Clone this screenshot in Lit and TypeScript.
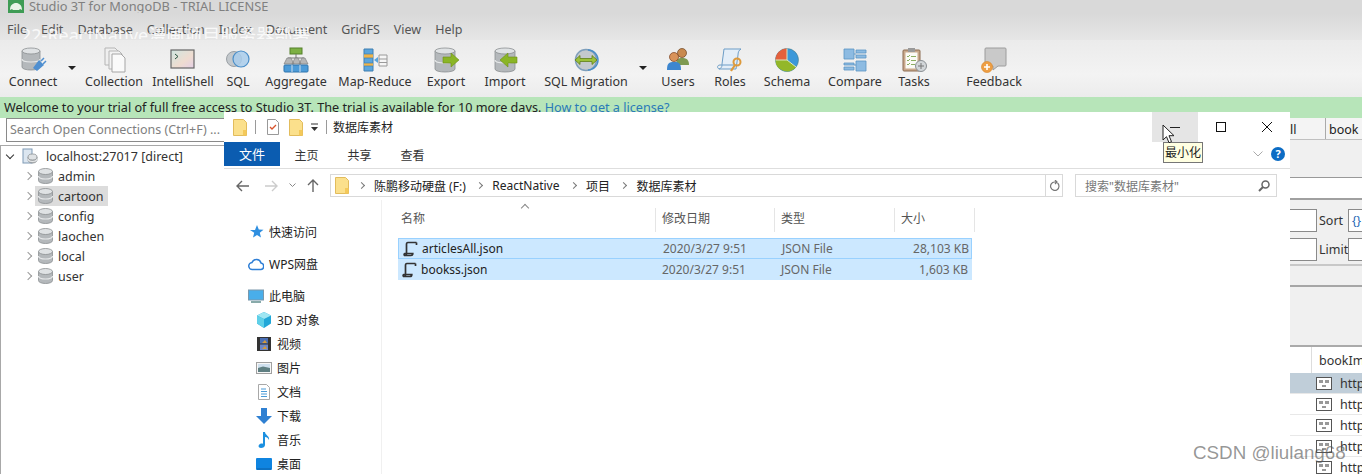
import { LitElement, html, css, svg } from 'lit';
import { customElement } from 'lit/decorators.js';

// little helpers for the repeated shapes
const cyl = (x: number, y: number, w: number, h: number) => svg`
  <path d="M${x} ${y + 3}v${h - 6}c0 4 ${w} 4 ${w} 0v-${h - 6}z" fill="#b4b8bb" stroke="#8b8f92" stroke-width=".8"/>
  <path d="M${x} ${y + h / 2}c0 4 ${w} 4 ${w} 0" fill="none" stroke="#e6e8e9" stroke-width="1.2"/>
  <ellipse cx="${x + w / 2}" cy="${y + 3}" rx="${w / 2}" ry="3" fill="#dfe2e4" stroke="#8b8f92" stroke-width=".8"/>`;

const tool = (body: unknown) => html`<svg width="28" height="26" viewBox="0 0 28 26">${body}</svg>`;
const small = (body: unknown) => html`<svg width="16" height="16" viewBox="0 0 16 16">${body}</svg>`;

const folder = html`<svg width="14" height="17" viewBox="0 0 14 17">
  <path d="M.5 .5h10l3 3v13H.5z" fill="#fbe08c" stroke="#e2bc5c"/>
  <path d="M10 11h3.5v5.5H10z" fill="#f4c95a"/>
</svg>`;

const dbSmall = html`<svg width="15" height="16" viewBox="0 0 15 16">${cyl(.5, .5, 14, 15)}</svg>`;

const jsonIcon = html`<svg width="15" height="16" viewBox="0 0 15 16">
  <path d="M5 1.500h8.500M5 1.500c-1.300 0-1.500 1-1.500 2v9.500M13.500 1.500v2.500M3.500 13c0 1.500-1 1.500-2.500 1.500h7c1.300 0 1.800-.7 1.800-2H1.500c-.5 0-.5 1-.5 2" fill="none" stroke="#333" stroke-width="1.700"/>
</svg>`;

const brokenImg = html`<svg width="16" height="13" viewBox="0 0 16 13">
  <rect x=".5" y=".5" width="15" height="12" fill="#fff" stroke="#555"/>
  <path d="M4 3v3M6 3v3M10 3v3M12 3v3M6 9h4" stroke="#333" fill="none"/>
</svg>`;

const toolIcons: Record<string, unknown> = {
  connect: tool(svg`${cyl(3, 1, 18, 22)}<path d="M14 21l6-8 5 5-7 6z" fill="#4f8fd0"/><path d="M22 14l3-3M24 17l3-3" stroke="#4f8fd0" stroke-width="1.500"/>`),
  collection: tool(svg`<path d="M5 1h10l3 3v14H5z" fill="#efefef" stroke="#b5b5b5"/><path d="M9 4h10l3 3v15H9z" fill="#f3f3f3" stroke="#b5b5b5"/><path d="M12 7h9l4 4v14H12z" fill="#fafafa" stroke="#a5a5a5"/>`),
  shell: tool(svg`<defs><linearGradient id="sh" x2="1" y2="1"><stop offset="0" stop-color="#cfe6e0"/><stop offset=".6" stop-color="#efdcd0"/><stop offset="1" stop-color="#e4cfe6"/></linearGradient></defs>
    <rect x="2" y="3" width="23" height="18" fill="url(#sh)" stroke="#666" stroke-width="1.200"/><path d="M6 7l3 2.500-3 2.500" fill="none" stroke="#27543f"/>`),
  sql: tool(svg`<circle cx="10" cy="12" r="7.500" fill="#c3c8cc" stroke="#9aa0a5"/><circle cx="17" cy="12" r="8" fill="#a9cdeb" fill-opacity=".85" stroke="#4a8ec8" stroke-width="1.200"/>`),
  aggregate: tool(svg`<rect x="8" y="1" width="12" height="6" fill="#7db044" stroke="#55802a"/><path d="M14 7v4M6 11h16" stroke="#777"/>
    <path d="M2 17l3-6h4l3 6zM10 17l3-6h3l3 6zM17 17l3-6h3l3 6z" fill="#b6b6b6" stroke="#808080" stroke-width=".7"/>
    <rect x="2" y="18" width="24" height="7" rx="1" fill="#4c9bd8" stroke="#2f75ad"/><path d="M10 18v7M18 18v7" stroke="#cde"/>`),
  mapreduce: tool(svg`<path d="M3 2h9v22H3z" fill="#5aa5dd" stroke="#3e7fb0"/><path d="M3 7h9v4H3zM3 16h9v3H3z" fill="#f0b44a"/><path d="M3 7h9M3 11h9M3 16h9M3 19h9" stroke="#3e7fb0" stroke-width=".7"/>
    <path d="M13 13l4-3v6z" fill="#5aa5dd"/><path d="M18 8h8v11h-8z" fill="#f6f6f6" stroke="#9a9a9a"/><path d="M18 12h8M18 15.500h8" stroke="#9a9a9a"/>`),
  export: tool(svg`${cyl(3, 1, 20, 24)}<path d="M11 10h8V6l8 7-8 7v-4h-8z" fill="#8ab526" stroke="#6b8f16" stroke-width=".6"/>`),
  import: tool(svg`${cyl(4, 1, 20, 24)}<path d="M26 10h-9V6l-8 7 8 7v-4h9z" fill="#8ab526" stroke="#6b8f16" stroke-width=".6"/>`),
  migration: tool(svg`<circle cx="14" cy="13" r="10.500" fill="#c4c9cd" stroke="#7f9fbb" stroke-width="1.500"/><path d="M16 3a10 10 0 0 1 0 20" fill="none" stroke="#4a8ec8" stroke-width="1.500"/>
    <path d="M3 13l5-4.500v3h12v-3l5 4.500-5 4.500v-3H8v3z" fill="#9cc13a" stroke="#5e7f17" stroke-width=".8"/>`),
  users: tool(svg`<circle cx="18" cy="6" r="4.500" fill="#c98a4f" stroke="#6c421f" stroke-width=".7"/><path d="M12 18c0-6 2-7 6-7s7 1 7 7z" fill="#7e9a52"/>
    <circle cx="10" cy="10" r="4.500" fill="#d9935a" stroke="#7a3d1c" stroke-width=".7"/><path d="M3 23c0-7 2-8 7-8s7 1 7 8z" fill="#3d86cf"/>`),
  roles: tool(svg`<path d="M8 2h17c-2 1-3 3-3 6l-2 14H3c3-1 3-3 3-5z" fill="#e4eef8" stroke="#6c9dc7"/><path d="M3 22c-2-1-2-4 1-4h14" fill="none" stroke="#6c9dc7"/>
    <circle cx="21" cy="15" r="3.500" fill="none" stroke="#dd9a3c" stroke-width="2"/><path d="M19 18l-4 6" stroke="#dd9a3c" stroke-width="2.200"/>`),
  schema: tool(svg`<circle cx="14" cy="13" r="11.500" fill="#3b98d9" stroke="#477" stroke-width=".5"/><path d="M14 13V1.500A11.500 11.500 0 0 0 2.500 13z" fill="#e4603d"/><path d="M14 13H2.500A11.500 11.500 0 0 0 23 20z" fill="#93b72a"/><path d="M14 1.500V13h-11.500M14 13l9 7" stroke="#dce6c0" fill="none"/>`),
  compare: tool(svg`<path d="M3 2h10v10H3zM15 3h10v3H15zM15 8h10v3H15z" fill="#8dbbe2" stroke="#5b94c4" stroke-width=".8"/><path d="M3 16h10v2H3zM3 20h10v3H3zM15 14h10v10H15z" fill="#8dbbe2" stroke="#5b94c4" stroke-width=".8"/><path d="M13 7h2M13 18h2" stroke="#5b94c4"/>`),
  tasks: tool(svg`<rect x="3" y="3" width="17" height="21" rx="1" fill="#c9a98c" stroke="#8b6d52"/><rect x="5.500" y="5.500" width="12" height="16" fill="#fbfbf6"/><rect x="8" y="1" width="7" height="4" fill="#9a9a9a"/>
    <path d="M7 9l1 1 2-2M7 13l1 1 2-2M7 17l1 1 2-2M11 9.500h5M11 13.500h5M11 17.500h4" stroke="#6e9a3c" fill="none" stroke-width=".8"/>
    <circle cx="21" cy="19" r="5.500" fill="#d2d6d9" stroke="#8a8f93"/><path d="M21 16v6M18 19h6" stroke="#777"/>`),
  feedback: tool(svg`<path d="M6 1h19a1 1 0 0 1 1 1v16a1 1 0 0 1-1 1h-7l-5 4v-4H6a1 1 0 0 1-1-1V2a1 1 0 0 1 1-1z" fill="#c9c9c9" stroke="#9c9c9c"/><circle cx="7" cy="20" r="5.500" fill="#ee9f45" stroke="#d98324" stroke-width=".6"/><path d="M7 17v6M4 20h6" stroke="#fff" stroke-width="1.600"/>`),
};

const toolbar = [
  { w: 58, label: 'Connect', icon: 'connect' }, { w: 20, arrow: true },
  { w: 64, label: 'Collection', icon: 'collection' }, { w: 74, label: 'IntelliShell', icon: 'shell' },
  { w: 36, label: 'SQL', icon: 'sql' }, { w: 80, label: 'Aggregate', icon: 'aggregate' },
  { w: 78, label: 'Map-Reduce', icon: 'mapreduce' }, { w: 64, label: 'Export', icon: 'export' },
  { w: 54, label: 'Import', icon: 'import' }, { w: 108, label: 'SQL Migration', icon: 'migration' },
  { w: 6, arrow: true }, { w: 64, label: 'Users', icon: 'users' }, { w: 40, label: 'Roles', icon: 'roles' },
  { w: 74, label: 'Schema', icon: 'schema' }, { w: 62, label: 'Compare', icon: 'compare' },
  { w: 56, label: 'Tasks', icon: 'tasks' }, { w: 104, label: 'Feedback', icon: 'feedback' },
];

const navIcons: Record<string, unknown> = {
  star: small(svg`<path d="M9 1l1.800 4.500 4.700.3-3.700 3 1.200 4.700L9 11l-4 2.500 1.200-4.700L2 6h5z" fill="#2f8fe0"/>`),
  cloud: small(svg`<path d="M4.500 13.500a3.500 3.500 0 0 1-.5-7 4.800 4.800 0 0 1 9 0.500 3.300 3.300 0 0 1 0 6.500z" fill="#fff" stroke="#2f7fd6" stroke-width="1.500"/>`),
  pc: small(svg`<rect x=".5" y="2" width="15" height="10" fill="#49aeea" stroke="#7a98ac"/><path d="M3 14h10" stroke="#8aa" stroke-width="2"/>`),
  cube: small(svg`<path d="M8 0l7 3.500v8L8 16l-7-4.500v-8z" fill="#22a7d8"/><path d="M8 7L1 3.500 8 0l7 3.500z" fill="#9fe6f2"/><path d="M1 3.500L8 7v9l-7-4.500z" fill="#5fd0e8"/>`),
  film: small(svg`<rect x="1" y="1" width="14" height="14" fill="#333"/><rect x="4" y="2" width="8" height="5.500" fill="#4a6fb5"/><rect x="4" y="8.500" width="8" height="5.500" fill="#6d88c8"/><path d="M6 7l3-3 2 3zM6 13l3-3 2 3z" fill="#d49a3c"/>`),
  pic: small(svg`<rect x=".5" y="2.500" width="15" height="11" fill="#f7f7f7" stroke="#a0a0a0"/><rect x="2" y="4" width="12" height="4" fill="#cfe0ee"/><path d="M2 8l5-1.500L14 8v4H2z" fill="#5f7f82"/>`),
  doc: small(svg`<path d="M2.500 .5h8l3 3v12h-11z" fill="#fff" stroke="#a8a8a8"/><path d="M5 5h5M5 7.500h6M5 10h6M5 12.500h6" stroke="#4a9bd8"/>`),
  down: small(svg`<path d="M5 0h6v8h5l-8 8-8-8h5z" fill="#2f80d2"/>`),
  music: small(svg`<path d="M7 0h2c0 3 5 4 4 8-1-2-2-3-4-3v8c0 2-2 3-4 3-3 0-3-3-1-4 1-.5 2-.5 3-.2z" fill="#1c90e0"/>`),
  desk: small(svg`<rect x="0" y="2" width="16" height="12" rx="1" fill="#0f84e0"/><path d="M1 13h14" stroke="#0a5fa6"/>`),
};

const navItems = [
  { label: '快速访问', icon: 'star', top: true, first: true },
  { label: 'WPS网盘', icon: 'cloud', top: true },
  { label: '此电脑', icon: 'pc', top: true },
  { label: '3D 对象', icon: 'cube' }, { label: '视频', icon: 'film' }, { label: '图片', icon: 'pic' },
  { label: '文档', icon: 'doc' }, { label: '下载', icon: 'down' }, { label: '音乐', icon: 'music' }, { label: '桌面', icon: 'desk' },
];

const dbs = ['admin', 'cartoon', 'config', 'laochen', 'local', 'user'];
const files = [
  { name: 'articlesAll.json', size: '28,103 KB' },
  { name: 'bookss.json', size: '1,603 KB' },
];
const crumbs = ['陈鹏移动硬盘 (F:)', 'ReactNative', '项目', '数据库素材'];

@customElement('app-root')
export class AppRoot extends LitElement {
  static styles = css`
    :host { display: block; width: 1362px; height: 474px; position: relative; overflow: hidden;
      font-family: "Noto Sans", "Noto Sans CJK SC", sans-serif; color: #222; background: #fff; }
    svg { display: block; flex: none; }

    /* Studio 3T behind */
    .app { display: flex; flex-direction: column; height: 474px; }
    .title { height: 13px; flex: none; background: #d9d9d9; display: flex; align-items: center; padding: 0 0 2px 8px; box-sizing: border-box; gap: 5px; font-size: 12.800px; color: #808080; overflow: hidden; }
    .logo { flex: none; margin-bottom: -2px; }
    .menu { height: 27px; flex: none; background: linear-gradient(#d9d9d9, #e6e6e6); display: flex; gap: 14px; align-items: center; padding: 5px 0 0 7px; box-sizing: border-box; font-size: 12.500px; color: #555; }
    .tools { height: 57px; flex: none; background: linear-gradient(#ebebeb, #f3f3f3 60%, #ececec); display: flex; padding-left: 4px; font-size: 12.500px; }
    .tool { display: flex; flex-direction: column; align-items: center; flex: none; padding-top: 7px; white-space: nowrap; }
    .tool span { line-height: 18px; color: #333; }
    .drop { display: flex; justify-content: center; flex: none; padding-top: 26px; }
    .arrow { width: 0; height: 0; flex: none; border: 4px solid transparent; border-top: 4px solid #222; border-bottom: 0; }
    .banner { height: 21px; flex: none; background: #b7e5b9; font-size: 12.650px; line-height: 21px; padding-left: 4px; white-space: nowrap; color: #222; }
    .banner a { color: #2a7ab8; }
    .body { flex: 1; display: flex; justify-content: space-between; min-height: 0; background: #fff; }
    .left { width: 224px; }
    .search { margin-left: 6px; height: 24px; box-sizing: border-box; border: 1px solid #8a8a8a; border-right: 0; font-size: 12.500px; color: #808080; line-height: 22px; padding-left: 3px; white-space: nowrap; }
    .tree { margin-top: 3px; border-top: 1px solid #a8a8a8; border-left: 1px solid #a8a8a8; height: 330px; font-size: 12.500px; color: #333; }
    .root { display: flex; align-items: center; height: 20px; padding-left: 6px; }
    .chev { width: 5px; height: 5px; border-right: 1.500px solid #333; border-bottom: 1.500px solid #333; transform: rotate(45deg); margin: 0 9px 3px 0; flex: none; }
    .root svg { margin-right: 8px; }
    .db { display: flex; align-items: center; height: 20px; padding-left: 24px; }
    .closed { width: 5px; height: 5px; border-right: 1.500px solid #999; border-top: 1.500px solid #999; transform: rotate(45deg); margin-right: 4px; flex: none; }
    .pick { display: flex; align-items: center; gap: 5px; height: 20px; padding: 0 4px 0 3px; }
    .pick.on { background: #dcdcdc; }

    .right { width: 72px; display: flex; flex-direction: column; font-size: 12.500px; background: #f0f0f0; }
    .tabs { height: 22px; flex: none; display: flex; border-bottom: 1px solid #c0c0c0; box-sizing: border-box; background: #f4f4f4; }
    .tabs div { line-height: 24px; white-space: nowrap; overflow: hidden; }
    .tabs .a { width: 35px; flex: none; text-indent: -8px; border-right: 1px solid #aaa; }
    .tabs .b { flex: 1; padding-left: 3px; }
    .gap1 { height: 38px; flex: none; border-bottom: 1px solid #999; box-sizing: border-box; }
    .whitebar { height: 22px; flex: none; background: #fff; border-bottom: 2px solid #a0a0a0; box-sizing: border-box; }
    .form { height: 66px; flex: none; border-bottom: 2px solid #c8c8c8; box-sizing: border-box; padding-top: 9px; display: flex; flex-direction: column; gap: 6px; }
    .fr { display: flex; align-items: center; height: 23px; }
    .box { background: #fff; border: 1px solid #8a8a8a; border-left: 0; height: 23px; box-sizing: border-box; flex: none; }
    .fr .box:first-child { width: 27px; }
    .fr span { width: 31px; flex: none; padding-left: 2px; box-sizing: border-box; color: #333; }
    .fr .box:last-child { flex: 1; border-left: 1px solid #8a8a8a; border-right: 0; font-size: 12px; color: #2467b5; padding-left: 3px; line-height: 21px; }
    .gap2 { height: 21px; flex: none; border-bottom: 2px solid #a6a6a6; box-sizing: border-box; }
    .gap3 { height: 60px; flex: none; border-bottom: 2px solid #aaa; box-sizing: border-box; }
    .grid { flex: 1; background: #fff; min-height: 0; overflow: hidden; }
    .grhead { height: 26px; box-sizing: border-box; line-height: 28px; margin-left: 21px; padding-left: 7px; border-left: 1px solid #ddd; color: #333; white-space: nowrap; }
    .row { height: 21px; display: flex; align-items: center; gap: 8px; padding-left: 26px; border-bottom: 1px solid #e8e8e8; box-sizing: border-box; overflow: hidden; color: #333; }
    .row.on { background: #c0ced9; }

    /* Explorer is a window on the desktop */
    .win { position: absolute; left: 224px; top: 112px; width: 1066px; height: 362px; background: #fff; display: flex; flex-direction: column; overflow: hidden; font-size: 12px; color: #333; }
    .wt { height: 30px; flex: none; display: flex; align-items: center; padding-left: 9px; }
    .sep { width: 1px; height: 14px; background: #9a9a9a; flex: none; }
    .wname { margin-left: 6px; color: #222; }
    .ctl { margin-left: auto; display: flex; height: 30px; }
    .ctl div { width: 46px; display: flex; align-items: center; justify-content: center; flex: none; }
    .ctl .hov { background: #e5e5e5; }
    .rib { height: 27px; flex: none; display: flex; align-items: stretch; border-bottom: 1px solid #dedede; box-sizing: border-box; }
    .rib .file { width: 56px; height: 24px; background: #0b5cb0; color: #fff; text-align: center; line-height: 24px; font-size: 13px; flex: none; }
    .rib .t { width: 53px; text-align: center; line-height: 28px; flex: none; }
    .rib .end { margin-left: auto; display: flex; align-items: center; gap: 8px; padding: 0 5px 3px 0; }
    .help { width: 14px; height: 14px; border-radius: 50%; background: #0c6cc4; color: #fff; font-weight: 700; font-size: 11px; line-height: 14px; text-align: center; }
    .addr { height: 31px; flex: none; display: flex; align-items: center; padding-top: 2px; box-sizing: border-box; }
    .nav { display: flex; align-items: center; width: 106px; flex: none; padding-left: 12px; box-sizing: border-box; }
    .abox { width: 716px; height: 23px; flex: none; border: 1px solid #d9d9d9; box-sizing: border-box; display: flex; align-items: center; padding-left: 4px; }
    .abox .sp { width: 4px; height: 1px; flex: none; }
    .gt { width: 4px; height: 4px; border-right: 1px solid #777; border-top: 1px solid #777; transform: rotate(45deg); margin: 0 10px 0 6px; flex: none; }
    .crumb { margin-right: 5.500px; color: #222; }
    .ref { width: 17px; height: 23px; flex: none; border: 1px solid #d9d9d9; border-left: 0; box-sizing: border-box; display: flex; align-items: center; justify-content: center; margin-right: 12px; }
    .sbox { width: 202px; height: 23px; flex: none; border: 1px solid #d9d9d9; box-sizing: border-box; display: flex; align-items: center; justify-content: space-between; padding: 0 6px 0 9px; color: #777; }
    .main { flex: 1; display: flex; min-height: 0; }
    .np { width: 158px; flex: none; border-right: 1px solid #f0f0f0; padding-top: 20px; box-sizing: border-box; color: #222; }
    .ni { height: 24px; display: flex; align-items: center; gap: 5px; padding-left: 32px; }
    .ni.top { padding-left: 24px; margin-top: 8px; }
    .ni.first { margin-top: 0; }
    .list { flex: 1; padding: 8px 0 0 16px; }
    .cols { display: grid; grid-template-columns: 258px 119px 120px 80px; }
    .head { height: 24px; width: 577px; color: #555; line-height: 22px; position: relative; }
    .head div { padding-left: 6px; border-right: 1px solid #e5e5e5; box-sizing: border-box; }
    .head div:first-child { padding-left: 3px; }
    .sort { position: absolute; left: 124px; top: -3px; width: 5px; height: 5px; border-left: 1px solid #888; border-top: 1px solid #888; transform: rotate(45deg); }
    .frows { margin-top: 6px; width: 574px; }
    .frow { display: grid; grid-template-columns: 258px 119px 120px 77px; height: 21px; align-items: center; background: #cce8ff; box-sizing: border-box; color: #666; }
    .frow.sel { border: 1px solid #99d1ff; }
    .frow .n { display: flex; align-items: center; gap: 4px; padding-left: 4px; color: #222; }
    .frow div:nth-child(2), .frow div:nth-child(3) { padding-left: 6px; }
    .frow .s { text-align: right; padding-right: 4px; }

    .tip { position: absolute; left: 1163px; top: 142px; width: 40px; height: 21px; box-sizing: border-box; background: #ffffe1; border: 1px solid #767676; font-size: 12px; line-height: 19px; text-align: center; color: #222; white-space: nowrap; }
    .cursor { position: absolute; left: 1162px; top: 124px; }
    .ghost { position: absolute; left: 21px; top: 26px; height: 13px; overflow: hidden; font-size: 18px; line-height: 18px; color: rgba(255, 255, 255, .8); white-space: nowrap; }
    .mark { position: absolute; left: 1193px; top: 442px; font-family: "Liberation Sans", sans-serif; font-size: 18.800px; line-height: 22px; color: rgba(80, 80, 80, .6); white-space: nowrap; }
  `;

  render() {
    return html`
      <div class="app">
        <div class="title">
          <svg class="logo" width="16" height="13" viewBox="0 0 16 13"><rect width="16" height="13" fill="#3f9c55"/><path d="M2 10c0-5 3-7 6-7s6 2 6 7l-2-1-1 1H5L4 9z" fill="#e8f3e6"/></svg>
          Studio 3T for MongoDB - TRIAL LICENSE
        </div>
        <div class="menu">
          ${['File', 'Edit', 'Database', 'Collection', 'Index', 'Document', 'GridFS', 'View', 'Help'].map(m => html`<span>${m}</span>`)}
        </div>
        <div class="tools">
          ${toolbar.map(t => t.arrow
            ? html`<div class="drop" style="width:${t.w}px"><div class="arrow"></div></div>`
            : html`<div class="tool" style="width:${t.w}px">${toolIcons[t.icon!]}<span>${t.label}</span></div>`)}
        </div>
        <div class="banner">Welcome to your trial of full free access to Studio 3T. The trial is available for 10 more days. <a>How to get a license?</a></div>
        <div class="body">
          <div class="left">
            <div class="search">Search Open Connections (Ctrl+F) ...</div>
            <div class="tree">
              <div class="root"><div class="chev"></div>${small(svg`<rect x="1" y="1" width="9" height="14" fill="#dce6f0" stroke="#7f9ab5"/>${cyl(6, 6, 9, 9)}`)}localhost:27017 [direct]</div>
              ${dbs.map(d => html`<div class="db"><div class="closed"></div><div class="pick ${d === 'cartoon' ? 'on' : ''}">${dbSmall}${d}</div></div>`)}
            </div>
          </div>
          <div class="right">
            <div class="tabs"><div class="a">All</div><div class="b">book</div></div>
            <div class="gap1"></div>
            <div class="whitebar"></div>
            <div class="form">
              <div class="fr"><div class="box"></div><span>Sort</span><div class="box">{}</div></div>
              <div class="fr"><div class="box"></div><span>Limit</span><div class="box"></div></div>
            </div>
            <div class="gap2"></div>
            <div class="gap3"></div>
            <div class="grid">
              <div class="grhead">bookIm</div>
              ${[0, 1, 2, 3, 4].map(i => html`<div class="row ${i === 0 ? 'on' : ''}">${brokenImg}http</div>`)}
            </div>
          </div>
        </div>
      </div>

      <div class="ghost">22-ReactNative漫画项目服务器部署</div>

      <div class="win">
        <div class="wt">
          ${folder}
          <div class="sep" style="margin:0 11px 0 8px"></div>
          <svg width="12" height="16" viewBox="0 0 12 16"><path d="M.5 .5h8l3 3v12H.5z" fill="#fff" stroke="#999"/><path d="M3 8l2 2 4-4" fill="none" stroke="#d9532c" stroke-width="1.300"/></svg>
          <div style="width:10px"></div>
          ${folder}
          <div style="width:7px"></div>
          <svg width="9" height="9" viewBox="0 0 9 9"><path d="M1 1h7" stroke="#333"/><path d="M1 4h7L4.500 8z" fill="#333"/></svg>
          <div class="sep" style="margin-left:7px"></div>
          <span class="wname">数据库素材</span>
          <div class="ctl">
            <div class="hov"><svg width="10" height="10" viewBox="0 0 10 10"><path d="M0 5.500h10" stroke="#222"/></svg></div>
            <div><svg width="10" height="10" viewBox="0 0 10 10"><rect x=".5" y=".5" width="9" height="9" fill="none" stroke="#111"/></svg></div>
            <div><svg width="10" height="10" viewBox="0 0 10 10"><path d="M0 0l10 10M10 0L0 10" stroke="#111"/></svg></div>
          </div>
        </div>
        <div class="rib">
          <div class="file">文件</div><div class="t">主页</div><div class="t">共享</div><div class="t">查看</div>
          <div class="end">
            <svg width="10" height="6" viewBox="0 0 10 6"><path d="M.5 .5L5 5 9.500 .5" fill="none" stroke="#aaa"/></svg>
            <div class="help">?</div>
          </div>
        </div>
        <div class="addr">
          <div class="nav">
            <svg width="13" height="12" viewBox="0 0 13 12"><path d="M13 6H1M6 1L1 6l5 5" fill="none" stroke="#666" stroke-width="1.400"/></svg>
            <svg width="13" height="12" viewBox="0 0 13 12" style="margin-left:16px"><path d="M0 6h12M7 1l5 5-5 5" fill="none" stroke="#ccc" stroke-width="1.400"/></svg>
            <svg width="7" height="5" viewBox="0 0 7 5" style="margin-left:11px"><path d="M.5 .5l3 3 3-3" fill="none" stroke="#888"/></svg>
            <svg width="12" height="13" viewBox="0 0 12 13" style="margin-left:11px"><path d="M6 13V1M1 6l5-5 5 5" fill="none" stroke="#666" stroke-width="1.400"/></svg>
          </div>
          <div class="abox">
            ${folder}
            <div class="sp"></div>
            ${crumbs.map(c => html`<div class="gt"></div><span class="crumb">${c}</span>`)}
          </div>
          <div class="ref"><svg width="11" height="12" viewBox="0 0 11 12"><path d="M8.500 3a4.200 4.200 0 1 1-3-1h2M6 0l2 2-2 2" fill="none" stroke="#777" stroke-width="1.200"/></svg></div>
          <div class="sbox">搜索"数据库素材"<svg width="12" height="12" viewBox="0 0 12 12"><circle cx="7.500" cy="4.500" r="3.500" fill="none" stroke="#666" stroke-width="1.500"/><path d="M5 7l-4 4" stroke="#666" stroke-width="2"/></svg></div>
        </div>
        <div class="main">
          <div class="np">
            ${navItems.map(n => html`<div class="ni ${n.top ? 'top' : ''} ${n.first ? 'first' : ''}">${navIcons[n.icon]}<span>${n.label}</span></div>`)}
          </div>
          <div class="list">
            <div class="cols head">
              <div>名称</div><div>修改日期</div><div>类型</div><div>大小</div>
              <span class="sort"></span>
            </div>
            <div class="frows">
              ${files.map((f, i) => html`
                <div class="frow ${i === 0 ? 'sel' : ''}">
                  <div class="n">${jsonIcon}${f.name}</div>
                  <div>2020/3/27 9:51</div>
                  <div>JSON File</div>
                  <div class="s">${f.size}</div>
                </div>`)}
            </div>
          </div>
        </div>
      </div>

      <div class="tip">最小化</div>
      <svg class="cursor" width="14" height="21" viewBox="0 0 14 21"><path d="M1 1v15l3.500-3.300 2.500 6 2.500-1-2.500-6H12z" fill="#fff" stroke="#222"/></svg>
      <div class="mark">CSDN @liulang68</div>
    `;
  }
}
